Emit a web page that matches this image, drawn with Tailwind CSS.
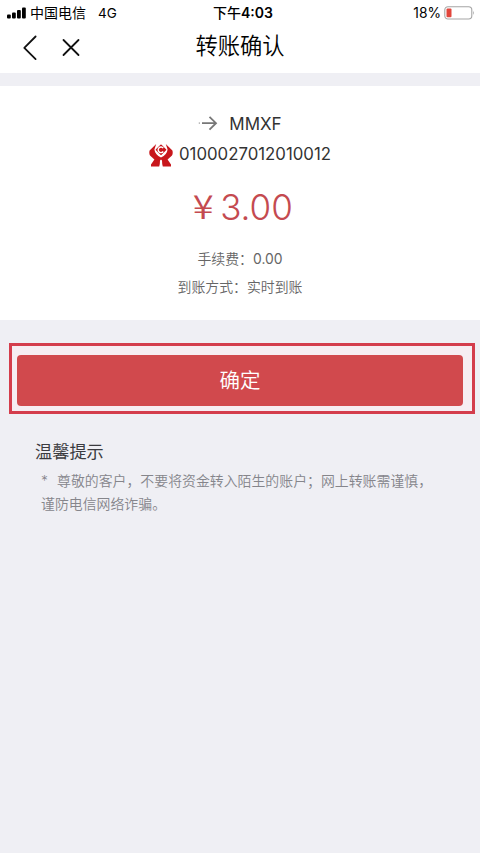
<!DOCTYPE html>
<html lang="zh-CN">
<head>
<meta charset="utf-8">
<meta name="viewport" content="width=device-width, initial-scale=1">
<title>转账确认</title>
<script src="https://cdn.jsdelivr.net/npm/@tailwindcss/browser@4"></script>
</head>
<body class="min-h-screen bg-[#efeff4] font-[Inter,'Noto_Sans_CJK_SC',sans-serif] text-black overflow-hidden">
<header class="bg-white h-[73px]">
  <div class="grid grid-cols-3 items-center h-6 text-[14px] leading-6 whitespace-nowrap">
    <div class="flex items-center pl-[7px]">
      <svg class="w-[19px] h-3 shrink-0" viewBox="0 0 19 12"><rect x="0" y="7.5" width="3.8" height="4" rx="1"/><rect x="5" y="5.5" width="3.8" height="6" rx="1"/><rect x="10" y="3" width="3.8" height="8.5" rx="1"/><rect x="15" y="0.5" width="3.8" height="11" rx="1"/></svg>
      <span class="ml-[4px]">中国电信</span>
      <span class="ml-3 pt-px text-[13.5px]">4G</span>
    </div>
    <div class="text-center font-semibold text-[14px] pl-[6px]"><span class="font-medium">下午</span>4:03</div>
    <div class="flex items-center justify-end pr-[5px]">
      <span class="pt-px text-[13.8px]">18%</span>
      <svg class="ml-[3px] w-[31px] h-[14px]" viewBox="0 0 31 14"><rect x=".8" y=".8" width="27" height="12.2" rx="3.2" fill="#fff" stroke="#a5a5a5" stroke-width="1.1"/><rect x="2.5" y="2.5" width="5" height="8.8" rx="1" fill="#e2463c"/><path d="M29.2 4.7q1.5 2.2 0 4.4z" fill="#999"/></svg>
    </div>
  </div>
  <div class="grid grid-cols-[1fr_auto_1fr] items-center h-[43px]">
    <div class="flex items-center pl-[22px] pt-[4px] gap-[23px]">
      <svg class="w-[16px] h-[26px]" viewBox="0 0 16 26" fill="none" stroke="#111" stroke-width="1.8" stroke-linecap="round" stroke-linejoin="round"><path d="M13.6 1.5 2.3 12.8 13.6 24.1"/></svg>
      <svg class="w-[20px] h-[20px]" viewBox="0 0 20 20" fill="none" stroke="#111" stroke-width="1.8" stroke-linecap="round"><path d="m2.5 2 15 15m0-15-15 15"/></svg>
    </div>
    <h1 class="text-[22.3px] leading-[42px] font-[350]">转账确认</h1>
    <div></div>
  </div>
</header>
<main>
  <section class="mt-[13px] bg-white h-[234px] pt-[24px] flex flex-col items-center">
    <div class="flex items-center h-[30px] text-[17px] text-[#333]">
      <svg class="w-[20px] h-[16px] mr-[11px] -mt-[2px]" viewBox="0 0 20 16" fill="none" stroke="#777" stroke-width="1.8"><path d="M.8 7.2h1" stroke="#aaa"/><path d="M4 7.2h14M11.5.8l6.5 6.4-6.5 6.4"/></svg>
      <span>MMXF</span>
    </div>
    <div class="flex items-center h-[30px] text-[16.8px] text-[#333]">
      <svg class="w-[24px] h-[24px] mr-[6px]" viewBox="0 0 24 24" fill="#c8171c"><path d="M7.2 1 .6 7.6Q-.2 10.5 1 12.5L5.4 16.5 2 21.5V23.5H10.2Q11 21 11 17.500L12 16.500l1 1q0 3.500.8 6H22V21.500L18.600 16.500 23 12.500Q24.200 10.500 23.400 7.600L16.800 1 18.600 6.400Q18 11.500 12 14.600 6 11.500 5.400 6.400Z"/><path d="M12 2.300 16.500 6.800 12 11.300 7.500 6.800Z" stroke="#c8171c" stroke-width="1.600" stroke-linejoin="round"/><path d="M14.200 5.100a2.800 2.800 0 1 0 0 3.400" fill="none" stroke="#fff" stroke-width="1.400"/></svg>
      <span>0100027012010012</span>
    </div>
    <div class="flex items-center h-[46px] mt-[14px] pl-[6px] text-[#c44a50] text-[35px] font-[350]"><span class="w-[20px] mr-[7px] flex justify-center font-['Noto_Sans_CJK_SC'] text-[33px] leading-[42px] -mt-[4px]"><span class="scale-x-115">¥</span></span><span>3.00</span></div>
    <div class="h-[28px] mt-[15px] text-[13.9px] leading-[28px] text-[#666] font-[350]">手续费：<span class="font-normal">0.00</span></div>
    <div class="h-[28px] text-[13.9px] leading-[28px] text-[#666] font-[350]">到账方式：实时到账</div>
  </section>
  <div class="mt-[23px] ml-[9px] mr-[5px] h-[71px] border-[3px] border-[#d43d4c] bg-[#f6edf2] pt-[9px] pl-[5px] pr-[9px]">
    <button class="block w-full h-[51px] rounded-[4px] bg-[#d1494d] text-white text-[20.5px] leading-[52px] font-[350]">确定</button>
  </div>
  <section class="mt-[25px] pl-[35px] whitespace-nowrap">
    <h2 class="text-[17.2px] leading-[26px] text-[#3b3b40]">温馨提示</h2>
    <div class="mt-[5px] pl-[6px] text-[13.9px] leading-[23px] text-[#85858b] font-[350]">
      <p class="flex"><span class="w-[16px]">*</span><span>尊敬的客户，不要将资金转入陌生的账户；网上转账需谨慎，</span></p>
      <p>谨防电信网络诈骗。</p>
    </div>
  </section>
</main>
</body>
</html>
